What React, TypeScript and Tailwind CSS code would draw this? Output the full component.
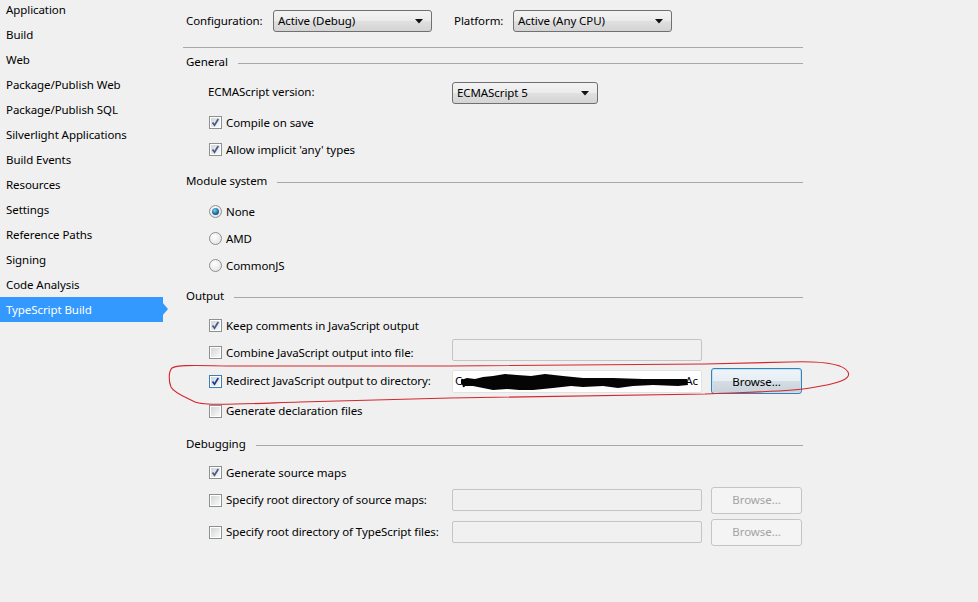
import React from 'react';

const pages = [
  'Application',
  'Build',
  'Web',
  'Package/Publish Web',
  'Package/Publish SQL',
  'Silverlight Applications',
  'Build Events',
  'Resources',
  'Settings',
  'Reference Paths',
  'Signing',
  'Code Analysis',
  'TypeScript Build',
];

function Arrow() {
  return (
    <svg width="8" height="5" viewBox="0 0 8 5" className="shrink-0">
      <path d="M0 0 L8 0 L4 4.5 Z" fill="#111" />
    </svg>
  );
}

function Combo({ className, text }: { className: string; text: string }) {
  return (
    <div
      className={`h-[22px] shrink-0 flex items-center justify-between pl-[4px] pr-[8px] border border-[#707070] rounded-[3px] bg-[linear-gradient(#f3f3f3_0%,#ebebeb_50%,#e0e0e0_51%,#d4d4d4_100%)] ${className}`}
    >
      <span>{text}</span>
      <Arrow />
    </div>
  );
}

function Checkbox({ checked, focus }: { checked?: boolean; focus?: boolean }) {
  return (
    <div
      className={`w-[13px] h-[13px] shrink-0 border p-px bg-white ${focus ? 'border-[#3c7fb1]' : 'border-[#8e8f8f]'}`}
    >
      <div className="w-full h-full bg-[linear-gradient(135deg,#d2d4d6,#fafafa)] relative">
        {checked && (
          <svg width="11" height="11" viewBox="0 0 11 11" className="absolute -left-px -top-px">
            <path d="M2.5 5.5 L4.5 8.3 L8.3 2" fill="none" stroke={focus ? '#1c3f94' : '#4a5a8c'} strokeWidth="1.7" />
          </svg>
        )}
      </div>
    </div>
  );
}

function Radio({ checked }: { checked?: boolean }) {
  return (
    <div className="w-[13px] h-[13px] shrink-0 rounded-full border border-[#8e8f8f] bg-[radial-gradient(circle_at_40%_35%,#ffffff,#dcdcdc)] flex items-center justify-center">
      {checked && (
        <div className="w-[7px] h-[7px] rounded-full bg-[radial-gradient(circle_at_40%_35%,#7ad2f4,#1f6a9e_55%,#0d3f66)]" />
      )}
    </div>
  );
}

function TextBox({ className = '' }: { className?: string }) {
  return (
    <div className={`w-[250px] h-[22px] shrink-0 border border-[#c4c4c4] rounded-[2px] bg-[#f0f0f0] ${className}`} />
  );
}

function Button({ disabled }: { disabled?: boolean }) {
  return disabled ? (
    <div className="w-[91px] h-[27px] flex items-center justify-center rounded-[3px] border border-[#c2c5c8] bg-[#f4f4f4] text-[#a3a3a3]">
      Browse...
    </div>
  ) : (
    <div className="w-[91px] h-[26px] flex items-center justify-center rounded-[3px] border border-[#3c7fb1] bg-[linear-gradient(#eef5fa_0%,#e6eef4_50%,#d4dce4_51%,#c9d2da_100%)] shadow-[inset_0_0_0_1px_#bfe3f7] text-black">
      <span className="pt-px">Browse...</span>
    </div>
  );
}

function Header({ title }: { title: string }) {
  return (
    <div className="h-[16px] flex items-center pl-[3px] gap-[10px]">
      <span>{title}</span>
      <div className="flex-1 h-px bg-[#a8a8a8] mt-[2px]" />
    </div>
  );
}

function CheckRow({
  label,
  checked,
  focus,
  className = 'h-[27px]',
  children,
}: {
  label: string;
  checked?: boolean;
  focus?: boolean;
  className?: string;
  children?: React.ReactNode;
}) {
  return (
    <div className={`flex items-center pl-[26px] ${className}`}>
      <Checkbox checked={checked} focus={focus} />
      <span className="ml-[4px] w-[226px] shrink-0 whitespace-nowrap">{label}</span>
      {children}
    </div>
  );
}

function RadioRow({ label, checked }: { label: string; checked?: boolean }) {
  return (
    <div className="flex items-center h-[27px] pl-[26px]">
      <Radio checked={checked} />
      <span className="ml-[4px]">{label}</span>
    </div>
  );
}

function Redacted() {
  return (
    <div className="w-[250px] h-[23px] shrink-0 border border-[#e2e2e2] rounded-[2px] bg-white relative overflow-hidden flex items-center justify-between px-[2px]">
      <span>C</span>
      <span className="pr-px">Ac</span>
      <svg width="250" height="23" viewBox="0 0 250 23" className="absolute left-0 top-0">
        <path
          d="M8 9 L14 7 L22 8 L30 6 L40 5 L52 3 L64 4 L78 5 L92 3 L110 5 L130 7 L160 7 L190 8 L215 8 L234 8 L235 14 L225 15 L200 14 L180 15 L165 17 L150 15 L130 16 L118 15 L100 17 L80 19 L66 19 L54 18 L40 19 L30 17 L20 15 L12 15 L8 13 Z"
          fill="#050505"
        />
        <path d="M9 8 L11 16" stroke="#050505" strokeWidth="2" />
      </svg>
    </div>
  );
}

export default function App() {
  return (
    <div
      className="w-[978px] h-[602px] bg-[#f0f0f0] text-[11.5px] tracking-[-0.08px] text-black relative overflow-hidden flex"
      style={{ fontFamily: '"Noto Sans", "Open Sans", sans-serif' }}
    >
      {/* page list */}
      <div className="w-[163px] shrink-0 -mt-[3px]">
        {pages.map((p) => {
          const sel = p === 'TypeScript Build';
          return (
            <div
              key={p}
              className={`h-[25px] flex items-center pl-[6px] relative ${sel ? 'bg-[#3399ff] text-white' : ''}`}
            >
              {p}
              {sel && (
                <svg width="7" height="14" viewBox="0 0 7 14" className="absolute -right-[6px] top-[5px]">
                  <path d="M0 0 L6 7 L0 14 Z" fill="#3399ff" />
                </svg>
              )}
            </div>
          );
        })}
      </div>

      {/* property page */}
      <div className="ml-[20px] w-[620px] flex flex-col">
        <div className="mt-[10px] flex items-center h-[22px] pl-[3px]">
          <span className="w-[87px] shrink-0">Configuration:</span>
          <Combo className="w-[159px]" text="Active (Debug)" />
          <span className="ml-[22px] w-[59px] shrink-0">Platform:</span>
          <Combo className="w-[159px]" text="Active (Any CPU)" />
        </div>
        <div className="mt-[15px] h-px bg-[#a8a8a8]" />

        <div className="mt-[6px]">
          <Header title="General" />
        </div>
        <div className="mt-[12px] flex items-center h-[22px] pl-[25px]">
          <span className="w-[244px] shrink-0 -mt-[3px]">ECMAScript version:</span>
          <Combo className="w-[146px]" text="ECMAScript 5" />
        </div>
        <div className="mt-[5px]">
          <CheckRow label="Compile on save" checked />
          <CheckRow label="Allow implicit 'any' types" checked />
        </div>

        <div className="mt-[10px]">
          <Header title="Module system" />
        </div>
        <div className="mt-[9px]">
          <RadioRow label="None" checked />
          <RadioRow label="AMD" />
          <RadioRow label="CommonJS" />
        </div>

        <div className="mt-[9px]">
          <Header title="Output" />
        </div>
        <div className="mt-[8px]">
          <CheckRow label="Keep comments in JavaScript output" checked />
          <CheckRow label="Combine JavaScript output into file:">
            <TextBox className="mb-[5px]" />
          </CheckRow>
          <CheckRow label="Redirect JavaScript output to directory:" checked focus className="h-[30px]">
            <Redacted />
            <div className="ml-[9px]">
              <Button />
            </div>
          </CheckRow>
          <CheckRow label="Generate declaration files" className="h-[30px]" />
        </div>

        <div className="mt-[10px]">
          <Header title="Debugging" />
        </div>
        <div className="mt-[7px] flex flex-col">
          <CheckRow label="Generate source maps" checked />
          <CheckRow label="Specify root directory of source maps:" className="h-[28px]">
            <TextBox />
            <div className="ml-[9px]">
              <Button disabled />
            </div>
          </CheckRow>
          <CheckRow label="Specify root directory of TypeScript files:" className="h-[28px] mt-[4px]">
            <TextBox />
            <div className="ml-[9px]">
              <Button disabled />
            </div>
          </CheckRow>
        </div>
      </div>

      {/* hand-drawn annotation */}
      <svg
        width="978"
        height="602"
        viewBox="0 0 978 602"
        className="absolute left-0 top-0 pointer-events-none"
      >
        <path
          d="M240 366 C205 366, 178 364, 172 368 C168 372, 169 382, 171 387 C174 393, 185 397, 195 402 C205 406, 240 404, 300 402 L450 398 L705 394 C740 392, 790 392, 810 388 C835 384, 852 380, 848 372 C843 363, 820 361, 790 362 L705 364 L450 366 Z"
          fill="none"
          stroke="#d4262c"
          strokeWidth="1.1"
        />
      </svg>
    </div>
  );
}
